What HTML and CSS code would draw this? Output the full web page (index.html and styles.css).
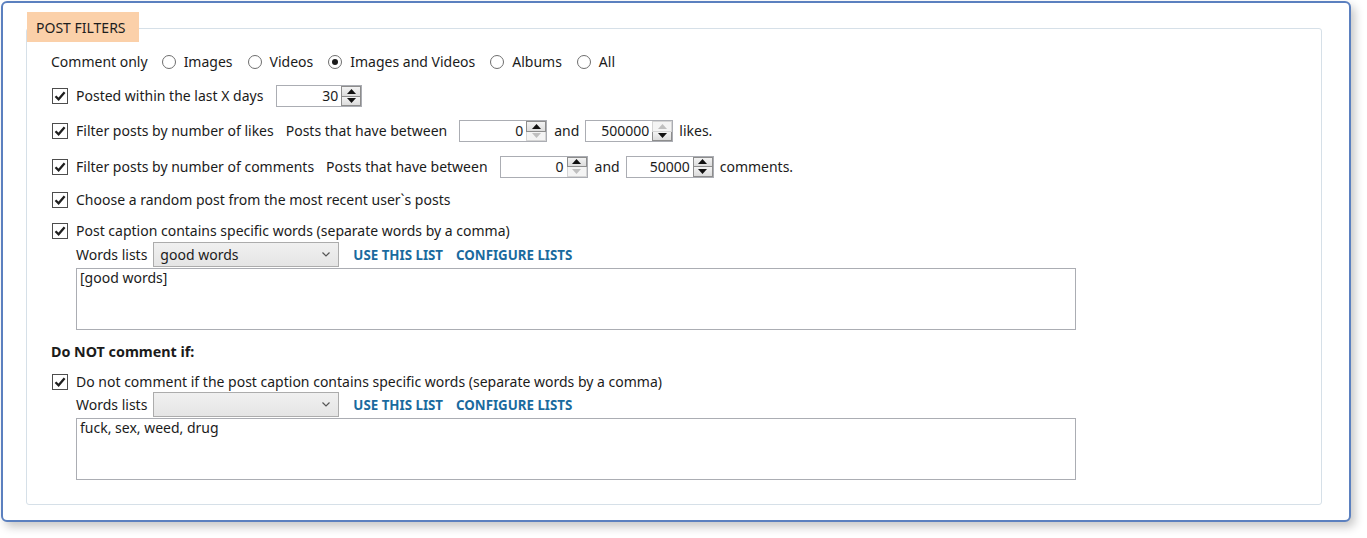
FILE: index.html
```html
<!DOCTYPE html>
<html>
<head>
<meta charset="utf-8">
<link rel="stylesheet" href="styles.css">
</head>
<body>
<div class="window">
  <div class="groupbox">
    <div class="legend">POST FILTERS</div>

    <div class="row r1">
      <span class="txt">Comment only</span>
      <span class="radio first"><span class="rb"></span><span class="txt">Images</span></span>
      <span class="radio"><span class="rb"></span><span class="txt">Videos</span></span>
      <span class="radio"><span class="rb on"></span><span class="txt">Images and Videos</span></span>
      <span class="radio"><span class="rb"></span><span class="txt">Albums</span></span>
      <span class="radio"><span class="rb"></span><span class="txt">All</span></span>
    </div>

    <div class="row r2">
      <span class="cb"><svg viewBox="0 0 14 14"><path d="M2.5 7.2 L5.6 10.3 L11.6 3.3" /></svg></span>
      <span class="txt">Posted within the last X days</span>
      <span class="spin s-days">
        <span class="val">30</span>
        <span class="btns">
          <span class="sb"><svg viewBox="0 0 9 5"><path d="M0 5L4.5 0L9 5Z"/></svg></span>
          <span class="sb"><svg viewBox="0 0 9 5"><path d="M0 0L4.5 5L9 0Z"/></svg></span>
        </span>
      </span>
    </div>

    <div class="row r3">
      <span class="cb"><svg viewBox="0 0 14 14"><path d="M2.5 7.2 L5.6 10.3 L11.6 3.3" /></svg></span>
      <span class="txt">Filter posts by number of likes</span>
      <span class="txt between">Posts that have between</span>
      <span class="spin">
        <span class="val">0</span>
        <span class="btns">
          <span class="sb"><svg viewBox="0 0 9 5"><path d="M0 5L4.5 0L9 5Z"/></svg></span>
          <span class="sb dis"><svg viewBox="0 0 9 5"><path d="M0 0L4.5 5L9 0Z"/></svg></span>
        </span>
      </span>
      <span class="txt and">and</span>
      <span class="spin">
        <span class="val">500000</span>
        <span class="btns">
          <span class="sb dis"><svg viewBox="0 0 9 5"><path d="M0 5L4.5 0L9 5Z"/></svg></span>
          <span class="sb"><svg viewBox="0 0 9 5"><path d="M0 0L4.5 5L9 0Z"/></svg></span>
        </span>
      </span>
      <span class="txt unit">likes.</span>
    </div>

    <div class="row r4">
      <span class="cb"><svg viewBox="0 0 14 14"><path d="M2.5 7.2 L5.6 10.3 L11.6 3.3" /></svg></span>
      <span class="txt">Filter posts by number of comments</span>
      <span class="txt between">Posts that have between</span>
      <span class="spin">
        <span class="val">0</span>
        <span class="btns">
          <span class="sb"><svg viewBox="0 0 9 5"><path d="M0 5L4.5 0L9 5Z"/></svg></span>
          <span class="sb dis"><svg viewBox="0 0 9 5"><path d="M0 0L4.5 5L9 0Z"/></svg></span>
        </span>
      </span>
      <span class="txt and">and</span>
      <span class="spin">
        <span class="val">50000</span>
        <span class="btns">
          <span class="sb"><svg viewBox="0 0 9 5"><path d="M0 5L4.5 0L9 5Z"/></svg></span>
          <span class="sb"><svg viewBox="0 0 9 5"><path d="M0 0L4.5 5L9 0Z"/></svg></span>
        </span>
      </span>
      <span class="txt unit">comments.</span>
    </div>

    <div class="row r5">
      <span class="cb"><svg viewBox="0 0 14 14"><path d="M2.5 7.2 L5.6 10.3 L11.6 3.3" /></svg></span>
      <span class="txt">Choose a random post from the most recent user`s posts</span>
    </div>

    <div class="row r6">
      <span class="cb"><svg viewBox="0 0 14 14"><path d="M2.5 7.2 L5.6 10.3 L11.6 3.3" /></svg></span>
      <span class="txt">Post caption contains specific words (separate words by a comma)</span>
    </div>

    <div class="row words">
      <span class="txt">Words lists</span>
      <span class="select"><span class="sel-val">good words</span><svg class="chev" viewBox="0 0 8 5"><path d="M0.5 0.5L4 4L7.5 0.5"/></svg></span>
      <span class="link">USE THIS LIST</span>
      <span class="link">CONFIGURE LISTS</span>
    </div>
    <div class="textarea">[good words]</div>

    <div class="row heading">Do NOT comment if:</div>

    <div class="row r7">
      <span class="cb"><svg viewBox="0 0 14 14"><path d="M2.5 7.2 L5.6 10.3 L11.6 3.3" /></svg></span>
      <span class="txt">Do not comment if the post caption contains specific words (separate words by a comma)</span>
    </div>

    <div class="row words">
      <span class="txt">Words lists</span>
      <span class="select"><span class="sel-val"></span><svg class="chev" viewBox="0 0 8 5"><path d="M0.5 0.5L4 4L7.5 0.5"/></svg></span>
      <span class="link">USE THIS LIST</span>
      <span class="link">CONFIGURE LISTS</span>
    </div>
    <div class="textarea">fuck, sex, weed, drug</div>
  </div>
</div>
</body>
</html>
```

FILE: styles.css
```css
* { box-sizing: border-box; }

html, body {
  margin: 0;
  padding: 0;
  background: #ffffff;
}

body {
  font-family: "Noto Sans", "Open Sans", sans-serif;
  font-size: 14px;
  color: #1b1b1b;
  width: 1367px;
  height: 538px;
  overflow: hidden;
}

.window {
  margin: 1px 0 0 1px;
  width: 1350px;
  height: 521px;
  border: 2px solid #5b80bf;
  border-radius: 6px;
  background: #ffffff;
  box-shadow: 4px 5px 10px rgba(0, 0, 0, 0.22);
  padding: 25px 27px 15px 23px;
}

.groupbox {
  position: relative;
  height: 100%;
  border: 1px solid #d6e0e8;
  border-radius: 3px;
  padding: 16px 0 0 24px;
  display: flex;
  flex-direction: column;
}

.legend {
  position: absolute;
  left: 0;
  top: -17px;
  height: 30px;
  width: 112px;
  background: #fbd0a9;
  padding-left: 9px;
  display: flex;
  align-items: center;
  font-size: 14px;
  color: #1e1e1e;
}

.row {
  display: flex;
  align-items: center;
  white-space: nowrap;
}

.txt { line-height: 18px; }

.r1 { height: 34px; }
.r2 { height: 34px; }
.r3 { height: 36px; }
.r4 { height: 35px; }
.r5 { height: 32px; }
.r6 { height: 26px; padding-top: 4px; }

.radio {
  display: flex;
  align-items: center;
  margin-left: 15px;
}
.radio.first { margin-left: 14px; }

.rb {
  width: 14px;
  height: 14px;
  border: 1px solid #6e6e6e;
  border-radius: 50%;
  background: #ffffff;
  margin-right: 8px;
  display: flex;
  align-items: center;
  justify-content: center;
}
.rb.on::after {
  content: "";
  width: 6px;
  height: 6px;
  border-radius: 50%;
  background: #1b1b1b;
}

.cb {
  width: 16px;
  height: 16px;
  border: 1px solid #4d4d4d;
  background: #ffffff;
  margin-left: 1px;
  margin-right: 8px;
  display: flex;
  align-items: center;
  justify-content: center;
}
.cb svg {
  width: 14px;
  height: 14px;
  fill: none;
  stroke: #1f1f1f;
  stroke-width: 2.3;
}

.spin {
  display: flex;
  align-items: stretch;
  height: 22px;
  width: 88px;
  border: 1px solid #abadb3;
  background: #ffffff;
  padding: 0 0 0 4px;
}
.s-days { width: 86px; margin-left: 13px; }

.val {
  flex: 1;
  text-align: right;
  padding-right: 3px;
  line-height: 20px;
}

.btns {
  display: flex;
  flex-direction: column;
  width: 20px;
}
.sb {
  flex: 1;
  display: flex;
  align-items: center;
  justify-content: center;
  border: 1px solid #8d8d8d;
  background: linear-gradient(#f3f3f3, #dcdcdc);
}
.sb + .sb { border-top: none; }
.sb svg {
  width: 9px;
  height: 5px;
  fill: #111111;
}
.sb.dis {
  border-color: #d5d5d5;
  background: #f4f4f4;
}
.sb.dis svg { fill: #bfbfbf; }

.between { margin-left: 12px; margin-right: 12px; }
.and { margin-left: 7px; margin-right: 6px; }
.unit { margin-left: 6px; }

.words {
  height: 25px;
  margin-left: 25px;
}
.select {
  display: flex;
  align-items: center;
  justify-content: space-between;
  margin-left: 6px;
  width: 186px;
  height: 25px;
  border: 1px solid #acacac;
  background: linear-gradient(#f0f0f0, #e5e5e5);
  padding: 0 8px 0 6px;
}
.chev {
  width: 8px;
  height: 5px;
  fill: none;
  stroke: #555555;
  stroke-width: 1.2;
}
.link {
  color: #1a6a9e;
  font-weight: bold;
  font-size: 13.3px;
  margin-left: 14px;
}
.link + .link { margin-left: 13px; }

.textarea {
  margin: 1px 0 0 25px;
  width: 1000px;
  height: 62px;
  border: 1px solid #abadb3;
  padding: 0 3px;
  line-height: 18px;
}

.heading {
  height: 42px;
  font-weight: bold;
  font-size: 14.3px;
}

.r7 { height: 20px; }
```
